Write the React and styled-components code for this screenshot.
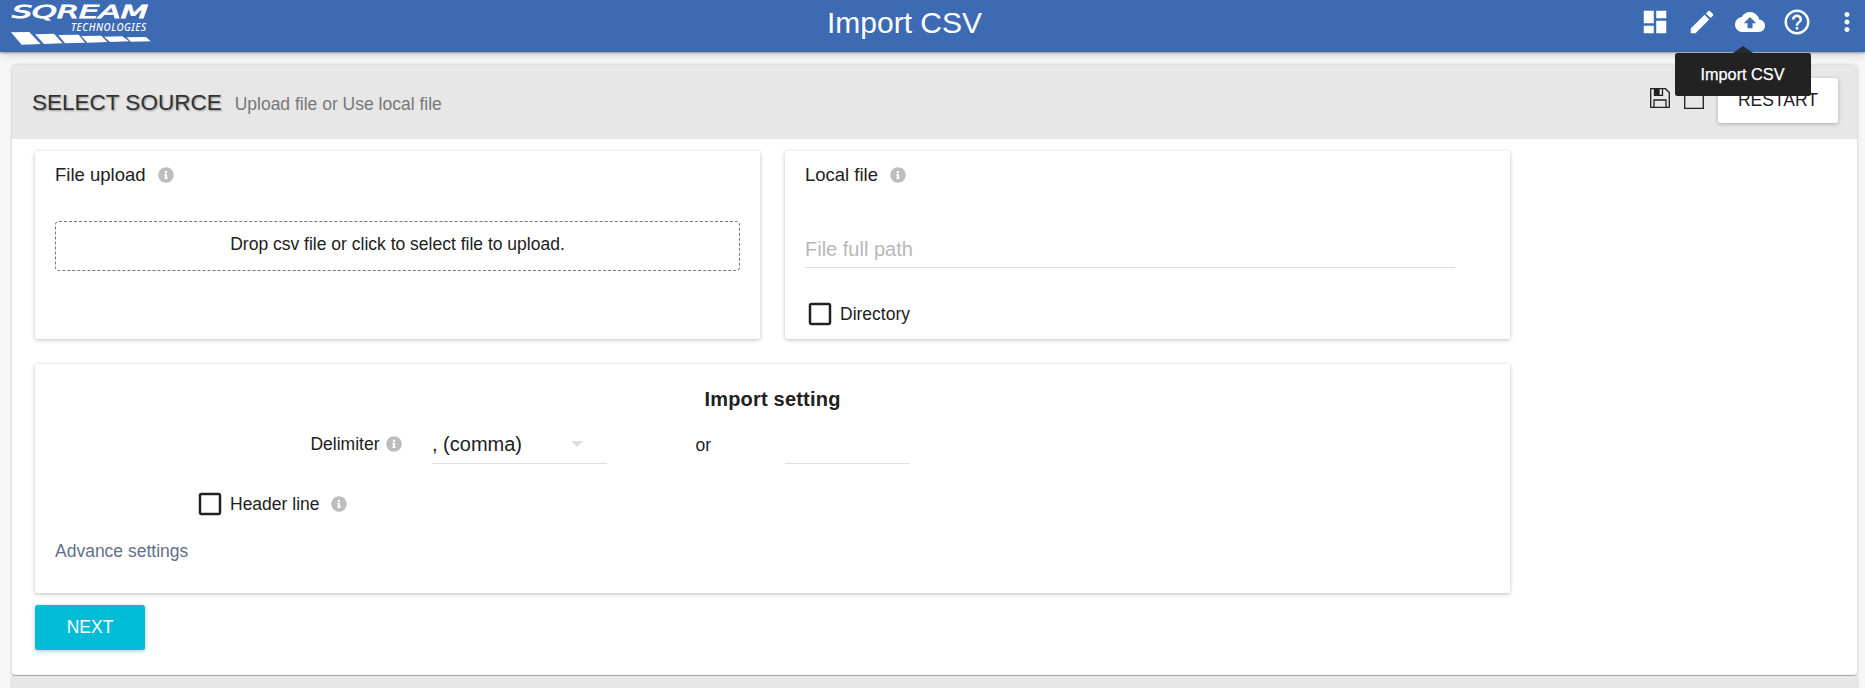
import React from 'react';
import styled, { createGlobalStyle } from 'styled-components';
import {
  MdDashboard,
  MdEdit,
  MdCloudUpload,
  MdHelpOutline,
  MdMoreVert,
  MdCheckBoxOutlineBlank,
} from 'react-icons/md';
import { FaInfoCircle } from 'react-icons/fa';

const GlobalStyle = createGlobalStyle`
  * { box-sizing: border-box; }
  body {
    margin: 0;
    overflow: hidden;
    background: #f7f7f7;
    color: #212121;
    font-family: "Liberation Sans", Arial, sans-serif;
    font-size: 17.5px;
  }
`;

const Page = styled.div`
  height: 688px;
  overflow: hidden;
  display: flex;
  flex-direction: column;
`;

const TopBar = styled.header`
  position: relative;
  z-index: 2;
  height: 52px;
  flex: none;
  display: grid;
  grid-template-columns: 1fr auto 1fr;
  background: #3d6bb3;
  box-shadow: 0 1px 2px rgba(0, 0, 0, 0.35), 0 3px 9px rgba(0, 0, 0, 0.14);
`;

const Logo = styled.svg`
  display: block;
  margin-left: 8px;
`;

const PageTitle = styled.h1`
  margin: 0 0 0 -56px;
  font-size: 30px;
  font-weight: 400;
  line-height: 45px;
  color: #fff;
`;

const Toolbar = styled.nav`
  display: flex;
  justify-content: flex-end;
  gap: 17.5px;
  height: 44px;
  align-items: center;
  padding-right: 3px;
  color: #fff;
`;

const ToolButton = styled.span`
  position: relative;
  display: flex;
  font-size: 30px;
  margin-left: ${(p) => (p.$spaced ? '2.5px' : 0)};
`;

const Tooltip = styled.span`
  position: absolute;
  top: 46px;
  left: -60px;
  width: 136px;
  height: 43px;
  border-radius: 2.5px;
  background: #222;
  color: #fff;
  font-size: 16.25px;
  line-height: 43px;
  text-align: center;
  -webkit-text-stroke: 0.25px #fff;

  &::before {
    content: '';
    position: absolute;
    left: 58px;
    bottom: 100%;
    border: solid transparent;
    border-width: 0 10px 7px;
    border-bottom-color: #222b38;
  }
`;

const Panel = styled.section`
  flex: none;
  margin: ${(p) => (p.$first ? '13px' : '0')} 8px 0 12px;
  background: #fff;
  border-radius: 4px;
  border-bottom: 1px solid #b8b8b8;
  box-shadow: 0 0 3px rgba(0, 0, 0, 0.2), 0 1px 6px rgba(0, 0, 0, 0.06);
`;

const PanelHeader = styled.div`
  height: 74px;
  display: flex;
  justify-content: space-between;
  padding: 0 19px 0 20px;
  border-radius: 4px 4px 0 0;
  background: #e7e7e7;
`;

const Heading = styled.div`
  display: flex;
  align-items: baseline;
  gap: 13px;
  line-height: 75px;
`;

const SectionTitle = styled.h2`
  margin: 0;
  font-size: 22.5px;
  font-weight: 400;
  color: #333;
  text-shadow: 1px 1px 2px rgba(0, 0, 0, 0.35);
`;

const SectionNote = styled.span`
  color: #777;
`;

const Actions = styled.div`
  display: flex;
  padding-top: 13px;
`;

const OutlineIcon = styled.svg`
  margin: 10px 14px 0 0;
`;

const Button = styled.button`
  height: 45px;
  width: ${(p) => p.$width};
  padding: 0;
  border: 0;
  border-radius: 2.5px;
  background: ${(p) => (p.$primary ? '#00bcd6' : '#fff')};
  color: ${(p) => (p.$primary ? '#fff' : '#212121')};
  font: inherit;
  line-height: 45px;
  box-shadow: 0 1px 4px rgba(0, 0, 0, 0.26);
`;

const PanelBody = styled.div`
  height: 536px;
  padding: 12px 23px 0;
`;

const CardRow = styled.div`
  display: flex;
  gap: 25px;
`;

const Card = styled.div`
  width: ${(p) => p.$width};
  height: ${(p) => p.$height};
  padding: 0 20px;
  border-radius: 2.5px;
  background: #fff;
  box-shadow: 0 1px 4px rgba(0, 0, 0, 0.26);
`;

const SettingsCard = styled(Card)`
  margin: 25px 0 12px;
  padding-top: 23px;
`;

const CardTitle = styled.div`
  display: flex;
  align-items: center;
  gap: 12px;
  height: 47px;
  font-size: 18.5px;
  line-height: 46px;
`;

const InfoIcon = styled(FaInfoCircle)`
  flex: none;
  width: 16px;
  height: 16px;
  color: #bdbdbd;
`;

const DropZone = styled.div`
  margin-top: 23px;
  height: 50px;
  border: 1px dashed #777;
  border-radius: 4px;
  line-height: 44px;
  text-align: center;
`;

const Field = styled.div`
  display: flex;
  justify-content: space-between;
  align-items: center;
  width: ${(p) => p.$width};
  height: ${(p) => p.$height || '39px'};
  border-bottom: 1px solid #dedede;
  font-size: 20px;
  color: ${(p) => (p.$placeholder ? '#b8b8b8' : '#212121')};
`;

const PathField = styled(Field)`
  margin: 34px 0 31px;
`;

const CheckRow = styled.label`
  display: flex;
  align-items: center;
  height: 30px;
  margin: ${(p) => p.$margin || 0};
  gap: 5px;

  ${InfoIcon} { margin-left: 6px; }
`;

const CheckBox = styled(MdCheckBoxOutlineBlank)`
  width: 30px;
  height: 30px;
`;

const SettingsTitle = styled.h3`
  margin: 0 0 14px;
  font-size: 20px;
  line-height: 24px;
  text-align: center;
  letter-spacing: 0.2px;
`;

const DelimiterRow = styled.div`
  display: flex;
`;

const DelimiterLabel = styled.div`
  display: flex;
  align-items: center;
  justify-content: flex-end;
  gap: 6.5px;
  width: 347px;
  height: 38px;
  margin-right: 30px;
`;

const Caret = styled.span`
  margin-right: 24px;
  border: solid transparent;
  border-width: 6.5px 6.5px 0;
  border-top-color: #dedede;
`;

const Or = styled.span`
  width: 178px;
  padding-left: 88.5px;
  line-height: 40px;
`;

const AdvanceLink = styled.a`
  display: block;
  margin-top: 20px;
  line-height: 24px;
  color: #62708a;
`;

function SqreamLogo() {
  return (
    <Logo width="150" height="48" viewBox="8 0 150 48" fill="#fff">
      <text
        x="12"
        y="17.8"
        fontFamily="DejaVu Sans, sans-serif"
        fontStyle="italic"
        fontSize="18.5"
        stroke="#fff"
        strokeWidth="0.9"
        textLength="136"
        lengthAdjust="spacingAndGlyphs"
      >
        SQREAM
      </text>
      <text
        x="71"
        y="30.7"
        fontFamily="Noto Sans, sans-serif"
        fontStyle="italic"
        fontWeight="500"
        fontSize="9.8"
        textLength="75"
        lengthAdjust="spacing"
      >
        TECHNOLOGIES
      </text>
      <path d="M11 32.3 29.3 32 40.7 44 21.7 44.7ZM35 34.3 54 33.7 62.7 43.3 44 44ZM58.3 35 78.7 34.7 85 42.7 65 43.3ZM81.3 36 101.3 35.7 107.3 42 87.3 42.7ZM104 36.7 122.3 36.3 129 41.3 110 42ZM126.7 37.3 146 37 150.7 41.3 130.7 41.7Z" />
    </Logo>
  );
}

export default function App() {
  return (
    <Page>
      <GlobalStyle />
      <TopBar>
        <SqreamLogo />
        <PageTitle>Import CSV</PageTitle>
        <Toolbar>
          <ToolButton><MdDashboard /></ToolButton>
          <ToolButton><MdEdit /></ToolButton>
          <ToolButton>
            <MdCloudUpload />
            <Tooltip>Import CSV</Tooltip>
          </ToolButton>
          <ToolButton><MdHelpOutline /></ToolButton>
          <ToolButton $spaced><MdMoreVert /></ToolButton>
        </Toolbar>
      </TopBar>

      <Panel $first>
        <PanelHeader>
          <Heading>
            <SectionTitle>SELECT SOURCE</SectionTitle>
            <SectionNote>Upload file or Use local file</SectionNote>
          </Heading>
          <Actions>
            <OutlineIcon width="20" height="20" viewBox="0 0 20 20" fill="none" stroke="#212121" strokeWidth="1.3">
              <path d="M.7.7H15.5L19.3 4.5V19.3H.7ZM4 19V12H16V19" />
              <path d="M4.5 1V7.3H12.5V1" />
              <path d="M5 1H9V6.8H5Z" fill="#212121" />
            </OutlineIcon>
            <OutlineIcon width="20" height="21" viewBox="0 0 20 21" fill="none" stroke="#212121" strokeWidth="1.3">
              <path d="M.7.7H19.3V20.3H.7Z" />
            </OutlineIcon>
            <Button $width="120px">RESTART</Button>
          </Actions>
        </PanelHeader>

        <PanelBody>
          <CardRow>
            <Card $width="725px" $height="188px">
              <CardTitle>File upload<InfoIcon /></CardTitle>
              <DropZone>Drop csv file or click to select file to upload.</DropZone>
            </Card>
            <Card $width="725px" $height="188px">
              <CardTitle>Local file<InfoIcon /></CardTitle>
              <PathField $width="650px" $height="36px" $placeholder>File full path</PathField>
              <CheckRow><CheckBox />Directory</CheckRow>
            </Card>
          </CardRow>

          <SettingsCard $width="1475px" $height="229px">
            <SettingsTitle>Import setting</SettingsTitle>
            <DelimiterRow>
              <DelimiterLabel>Delimiter<InfoIcon /></DelimiterLabel>
              <Field $width="175px">, (comma)<Caret /></Field>
              <Or>or</Or>
              <Field $width="125px" />
            </DelimiterRow>
            <CheckRow $margin="24px 0 0 140px"><CheckBox />Header line<InfoIcon /></CheckRow>
            <AdvanceLink>Advance settings</AdvanceLink>
          </SettingsCard>

          <Button $width="110px" $primary>NEXT</Button>
        </PanelBody>
      </Panel>

      <Panel>
        <PanelHeader />
      </Panel>
    </Page>
  );
}
